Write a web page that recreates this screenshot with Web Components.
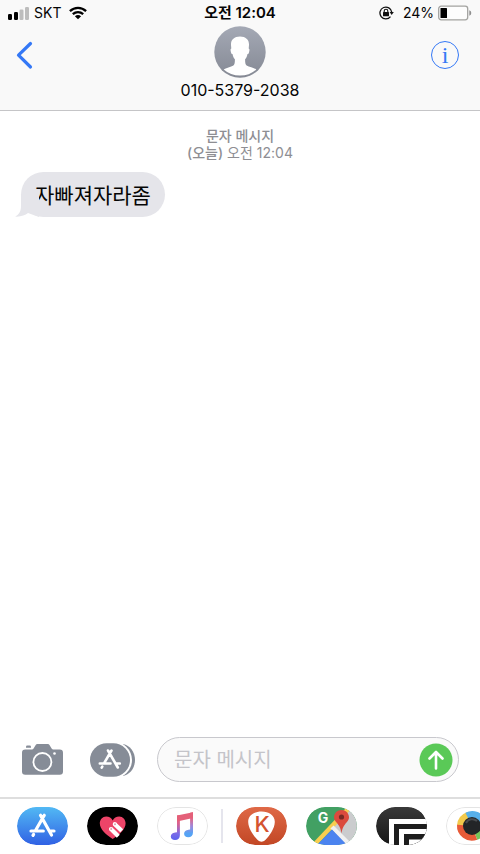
<!DOCTYPE html>
<html lang="ko">
<head>
<meta charset="utf-8">
<meta name="viewport" content="width=device-width, initial-scale=1">
<title>010-5379-2038</title>
<style>
    html, body {
        height: 100%;
        margin: 0;
    }
    body {
        font-family: Inter, "Noto Sans CJK KR", sans-serif;
        color: #050505;
        background: #ffffff;
    }
</style>
</head>
<body>
<messages-app></messages-app>

<script>
// small helper, every component clones its own template.
function define(name, html) {
    const temp = document.createElement('template');
    temp.innerHTML = html;

    window.customElements.define(name, class extends HTMLElement {
        constructor() {
            super();
            this.attachShadow({ mode: 'open' });
            this.shadowRoot.appendChild(temp.content.cloneNode(true));
        }
    });
}

// carrier, clock and battery.
define('status-bar', `
<style>
    :host {
        display: grid;
        grid-template-columns: 1fr auto 1fr;
        align-items: center;
        height: 26px;
        padding: 0 8px;
        font-size: 14px;
        line-height: 26px;
    }
    div {
        display: flex;
        align-items: center;
    }
    svg { display: block; }
    .left { gap: 5px; }
    .wifi { margin-left: 3px; }
    .right { justify-content: flex-end; gap: 4px; }
    .lock { margin-right: 5px; }
    time { font-size: 15px; font-weight: 600; }
</style>
<div class="left">
    <svg width="21" height="13" viewBox="0 0 21 13" aria-hidden="true">
        <rect x="0" y="7" width="4" height="6" rx="1.2"/>
        <rect x="6" y="5" width="4" height="8" rx="1.2"/>
        <rect x="11.5" y="2.5" width="4" height="10.5" rx="1.2" fill="#bdbdbd"/>
        <rect x="17" y="0" width="4" height="13" rx="1.2" fill="#bdbdbd"/>
    </svg>
    <span>SKT</span>
    <svg class="wifi" width="18" height="14" viewBox="0 0 18 14" fill="none" stroke="#000" stroke-width="2.3" aria-hidden="true">
        <path d="M.9 5.100C5.6.8 12.4.8 17.1 5.100"/>
        <path d="M3.8 8.200C6.900 5.500 11.1 5.500 14.200 8.200"/>
        <path d="M9 13.300 5.900 10.200Q9 7.900 12.100 10.200Z" fill="#000" stroke="none"/>
    </svg>
</div>
<time>오전 12:04</time>
<div class="right">
    <svg class="lock" width="15" height="14" viewBox="0 0 15 14" fill="none" stroke="#111" stroke-width="1.3" aria-hidden="true">
        <path d="M11.5 10.600A5.900 5.900 0 1 1 12.700 6.200"/>
        <path d="M10.6 6h4.200l-2.100 3z" fill="#111" stroke="none"/>
        <rect x="4" y="6" width="6" height="4.3" rx=".5" fill="#111" stroke="none"/>
        <path d="M5.200 6.300V5a1.800 1.800 0 0 1 3.600 0v1.300" stroke-width="1.1"/>
    </svg>
    <span>24%</span>
    <svg width="34" height="16" viewBox="0 0 34 16" aria-hidden="true">
        <rect x=".7" y="1.2" width="29" height="13.6" rx="2.5" fill="#fdfdfd" stroke="#a3a3a0" stroke-width="1.3"/>
        <rect x="2.5" y="3" width="6.500" height="10" rx=".6"/>
        <path d="M31.300 5.300q2 .6 2 2.700t-2 2.700z" fill="#8f8f8f"/>
    </svg>
</div>
`);

// back button, contact and info button.
define('contact-bar', `
<style>
    :host {
        display: grid;
        grid-template-columns: 1fr auto 1fr;
        height: 84px;
        padding: 0 16px;
    }
    button {
        display: flex;
        align-items: center;
        justify-content: center;
        align-self: start;
        width: 18px;
        height: 30px;
        margin: 14px 0 0;
        padding: 0;
        border: 0;
        background: none;
        color: #3478f6;
    }
    .info {
        justify-self: end;
        width: 38px;
    }
    .info span {
        box-sizing: border-box;
        width: 28px;
        height: 28px;
        border: 1px solid currentColor;
        border-radius: 50%;
        font: 24px/26px "Liberation Serif", serif;
        text-align: center;
    }
    .contact {
        display: flex;
        flex-direction: column;
        align-items: center;
        font-size: 16px;
        line-height: 25px;
    }
    svg { display: block; }
</style>
<button type="button" aria-label="뒤로">
    <svg width="18" height="30" viewBox="0 0 18 30" fill="none" stroke="currentColor" stroke-width="3.2" stroke-linecap="round" stroke-linejoin="round">
        <path d="M14.500 3.500 2.500 15.200 14.500 27"/>
    </svg>
</button>
<div class="contact">
    <svg width="52" height="52" viewBox="0 0 52 52" aria-hidden="true">
        <defs>
            <linearGradient id="grey" x2="0" y2="1">
                <stop stop-color="#a4a9b5"/>
                <stop offset="1" stop-color="#858994"/>
            </linearGradient>
        </defs>
        <circle cx="26" cy="26" r="25.7" fill="url(#grey)"/>
        <path d="M26 10.500c-5.800 0-9.300 3.300-9 8.500l.3 3.500c-1 .2-.9 1.500-.4 3.400.4 1.600.8 2.100 1.600 2.200.4 2.300 1.100 4 2.400 5.200 0 3.300-.2 5.100-1.500 6.100-2.400 1.600-7.600 2.200-9.700 4.100Q16.500 49.600 26 49.600t16.300-6.100c-2.100-1.900-7.300-2.500-9.700-4.100-1.300-1-1.500-2.800-1.500-6.100 1.300-1.200 2-2.900 2.400-5.200.8-.1 1.200-.6 1.600-2.200.5-1.900.6-3.200-.4-3.400L35 19c.3-5.200-3.200-8.500-9-8.500z" fill="#fff"/>
    </svg>
    <span>010-5379-2038</span>
</div>
<button class="info" type="button" aria-label="정보"><span>i</span></button>
`);

define('thread-stamp', `
<style>
    :host {
        display: block;
        color: #8e8e93;
        font-size: 14px;
        line-height: 17px;
        text-align: center;
    }
    b { font-weight: 500; }
</style>
<b><slot name="kind"></slot></b><br>
<b><slot name="day"></slot></b> <slot></slot>
`);

define('message-bubble', `
<style>
    :host {
        display: block;
        position: relative;
        width: fit-content;
        padding: 9px 14px 7px;
        border-radius: 23px;
        background: #e5e5ea;
        color: #050505;
        font-size: 21px;
        line-height: 29px;
    }
    svg {
        position: absolute;
        left: -6px;
        bottom: 0;
    }
</style>
<svg width="24" height="22" viewBox="0 0 24 22" fill="#e5e5ea" aria-hidden="true">
    <path d="M6 0v10.500C6 16 4.500 19.500 0 21.600c5.500.4 10-1 13-3.500l11 3.900V0z"/>
</svg>
<slot></slot>
`);

// camera, apps and the text field.
define('message-composer', `
<style>
    :host {
        display: flex;
        align-items: center;
        padding: 0 21px;
    }
    button {
        flex: none;
        display: block;
        margin: 0;
        padding: 0;
        border: 0;
        background: none;
    }
    svg { display: block; }
    .apps { margin: 0 22px 0 26px; }
    form {
        flex: 1;
        display: flex;
        align-items: center;
        box-sizing: border-box;
        min-width: 0;
        height: 45px;
        margin: 0;
        padding: 0 5px 0 16px;
        border: 1px solid #c8c8cd;
        border-radius: 23px;
        background: #fafafa;
    }
    input {
        flex: 1;
        min-width: 0;
        padding: 0;
        border: 0;
        outline: 0;
        background: none;
        color: #050505;
        font: inherit;
        font-size: 20px;
        line-height: 30px;
    }
    input::placeholder { color: #c4c4c9; opacity: 1; }
</style>
<button type="button" aria-label="카메라">
    <svg width="43" height="34" viewBox="0 0 43 34">
        <path d="M5 4.800V3.900Q5 2.600 6.300 2.600H8.700Q10 2.600 10 3.900V4.800Z" fill="#868c97"/>
        <path d="M4.300 6.500H10.200c1.300 0 2-.5 2.700-1.600l1.500-2.500C15 1.300 15.800.9 17 .9h9.200c1.200 0 2 .4 2.600 1.500l1.500 2.500c.7 1.100 1.400 1.600 2.700 1.600h5.700c2.200 0 3.300 1.100 3.300 3.300v18.600c0 2.200-1.100 3.300-3.300 3.300H4.300c-2.200 0-3.300-1.100-3.300-3.300V9.800c0-2.200 1.100-3.300 3.300-3.300z" fill="#868c97"/>
        <circle cx="21.4" cy="19" r="9" fill="none" stroke="#fff" stroke-width="1.8"/>
        <circle cx="33.5" cy="10.500" r="1.3" fill="#fff"/>
    </svg>
</button>
<button class="apps" type="button" aria-label="앱">
    <svg width="45" height="34" viewBox="0 0 45 34">
        <path d="M33 1c7 1.500 12 8 12 16s-5 14.500-12 16z" fill="#868c97"/>
        <rect x="-2" y="-1.500" width="44" height="37" rx="18.500" fill="#fff"/>
        <rect y=".3" width="40" height="33.400" rx="16.700" fill="#868c97"/>
        <g stroke="#fff" stroke-width="2.600" stroke-linecap="round" fill="none">
            <path d="M18 7.500 27.800 24.500M21.500 7.500 14 20.300M9.800 20.500H20.500M25.700 20.500H29.800M12.300 23.700 11.700 24.700"/>
        </g>
    </svg>
</button>
<form onsubmit="return false">
    <input type="text" placeholder="문자 메시지" aria-label="문자 메시지">
    <button type="submit" aria-label="보내기">
        <svg width="34" height="34" viewBox="0 0 34 34">
            <circle cx="17" cy="17" r="16.500" fill="#5ac957"/>
            <path d="M17 25.500V9.500M10.500 15.500 17 9l6.500 6.500" fill="none" stroke="#fff" stroke-width="2.600" stroke-linecap="round" stroke-linejoin="round"/>
        </svg>
    </button>
</form>
`);

// one pill in the dock, the drawing is slotted in.
define('app-pill', `
<style>
    :host { display: block; flex: none; }
    button {
        display: block;
        width: 51px;
        height: 38px;
        margin: 0;
        padding: 0;
        border: 0;
        border-radius: 19px;
        overflow: hidden;
        background: none;
    }
    ::slotted(svg) { display: block; }
</style>
<button type="button"><slot></slot></button>
`);

define('app-dock', `
<style>
    :host {
        display: flex;
        gap: 13px;
        padding: 8px 0 9px 17px;
        border-top: 2px solid #dedede;
        overflow: hidden;
    }
    .group {
        flex: none;
        display: flex;
        gap: 19px;
    }
    hr {
        flex: none;
        width: 2px;
        height: 34px;
        margin: 2px 0;
        border: 0;
        background: #e5e5ed;
    }
</style>
<div class="group">
    <app-pill>
        <svg width="51" height="38" viewBox="0 0 51 38" role="img" aria-label="App Store">
            <defs>
                <linearGradient id="sky" x2="0" y2="1">
                    <stop stop-color="#52b9f4"/>
                    <stop offset="1" stop-color="#3061e4"/>
                </linearGradient>
            </defs>
            <rect width="51" height="38" rx="19" fill="url(#sky)"/>
            <g stroke="#fff" stroke-width="3.200" stroke-linecap="round" fill="none">
                <path d="M23.500 8.300 34.500 28M27.300 8.300 18.500 23.500M14 24H26.300M32.500 24H37M16.600 27.400 16 28.400"/>
            </g>
        </svg>
    </app-pill>
    <app-pill>
        <svg width="51" height="38" viewBox="0 0 51 38" role="img" aria-label="Digital Touch">
            <rect width="51" height="38" rx="19"/>
            <path d="M25.700 32C19 27.600 12.800 22.300 12.800 16.300c0-4 2.800-6.900 6.400-6.900 2.900 0 5.300 1.400 6.500 4 1.200-2.600 3.600-4 6.500-4 3.600 0 6.400 2.900 6.400 6.900 0 6-6.200 11.300-12.900 15.700z" fill="#ed4468"/>
            <g stroke="#fff" stroke-width="4.200" fill="none">
                <path d="M27.800 17.200 34.700 23.700M24 22 31.300 29.300"/>
                <path d="M27.800 17.200h.01M24 22h.01" stroke-linecap="round"/>
            </g>
            <circle cx="28" cy="17.300" r="1" fill="#e0a0af"/>
            <circle cx="24.200" cy="22.100" r="1" fill="#e0a0af"/>
        </svg>
    </app-pill>
    <app-pill>
        <svg width="51" height="38" viewBox="0 0 51 38" role="img" aria-label="Music">
            <defs>
                <linearGradient id="note" x2="0" y2="1">
                    <stop stop-color="#f0607c"/>
                    <stop offset=".35" stop-color="#d8618f"/>
                    <stop offset=".75" stop-color="#7b6ce8"/>
                    <stop offset="1" stop-color="#5b62ee"/>
                </linearGradient>
                <linearGradient id="stem" x2="0" y2="1">
                    <stop offset=".2" stop-color="#ec6078"/>
                    <stop offset=".55" stop-color="#a287d8"/>
                    <stop offset=".85" stop-color="#55a3f5"/>
                </linearGradient>
            </defs>
            <rect x=".5" y=".5" width="50" height="37" rx="18.500" fill="#fff" stroke="#e4e4e4"/>
            <path d="M20 8.400 22.900 7.900V28c0 3.300-1.900 5-4.900 5-2.600 0-4.200-1.400-4.200-3.500 0-2.300 1.700-3.800 4.400-4l1.800-.2z" fill="url(#note)"/>
            <path d="M33.100 5.700 36 5.200V25.200c0 3.300-1.900 5.100-4.800 5.100-2.500 0-4.100-1.400-4.100-3.500 0-2.300 1.700-3.800 4.400-4l1.600-.2z" fill="url(#stem)"/>
            <path d="M20 8.400 36 5.200V11L20 14.500z" fill="#e46079"/>
        </svg>
    </app-pill>
</div>
<hr>
<div class="group">
    <app-pill>
        <svg width="51" height="38" viewBox="0 0 51 38" role="img" aria-label="Pick">
            <defs>
                <linearGradient id="clay" x2="0" y2="1">
                    <stop stop-color="#df6947"/>
                    <stop offset="1" stop-color="#c24725"/>
                </linearGradient>
            </defs>
            <rect width="51" height="38" rx="19" fill="url(#clay)"/>
            <path d="M25.500 4.500C33 4.500 39 8.600 38.800 15c-.2 6.500-5 13.500-9.500 17.900-2.400 2.300-5.200 2.300-7.600 0C17.200 28.500 12.400 21.500 12.200 15 12 8.600 18 4.500 25.500 4.500z" fill="#fff"/>
            <text x="26" y="25" text-anchor="middle" font-family="Inter, sans-serif" font-size="22" font-weight="500" fill="#d4532f">K</text>
        </svg>
    </app-pill>
    <app-pill>
        <svg width="51" height="38" viewBox="0 0 51 38" role="img" aria-label="Maps">
            <defs>
                <clipPath id="pill"><rect width="51" height="38" rx="19"/></clipPath>
            </defs>
            <g clip-path="url(#pill)">
                <rect width="51" height="38" fill="#42a063"/>
                <path d="M26 21 43 0h8v38H36z" fill="#cbccce"/>
                <path d="M8 38 45-1" stroke="#f8ce50" stroke-width="4.500"/>
                <path d="M26 20 44 38" stroke="#f1f1f1" stroke-width="4.500"/>
                <path d="M9.500 39.500 26 22.500 42 39z" fill="#4b83ef"/>
            </g>
            <path d="M35.500 26.500c-.8-6-2.500-8-5-11C29 13.700 28 12.300 28 10.200 28 6.200 31.300 3 35.500 3S43 6.200 43 10.200c0 2.100-1 3.500-2.500 5.300-2.500 3-4.200 5-5 11z" fill="#db4a3d"/>
            <circle cx="35.500" cy="10" r="2.600" fill="#772a24"/>
            <text x="17" y="16" text-anchor="middle" font-family="Inter, sans-serif" font-size="14" font-weight="700" fill="#fff">G</text>
        </svg>
    </app-pill>
    <app-pill>
        <svg width="51" height="38" viewBox="0 0 51 38" role="img" aria-label="Frames">
            <defs>
                <linearGradient id="coal" x2="0" y2="1">
                    <stop stop-color="#393939"/>
                    <stop offset="1" stop-color="#161616"/>
                </linearGradient>
            </defs>
            <rect width="51" height="38" rx="19" fill="url(#coal)"/>
            <path d="M13 38V12H51V38z" fill="#fff"/>
            <path d="M18 38V17H51V38z" fill="#1d1d1d"/>
            <path d="M23 38V22H51V38z" fill="#fff"/>
            <path d="M28 38V27H51V38z" fill="#1d1d1d"/>
            <path d="M33 38V32.500H51V38z" fill="#fff"/>
        </svg>
    </app-pill>
    <app-pill>
        <svg width="51" height="38" viewBox="0 0 51 38" role="img" aria-label="Camera">
            <rect x=".5" y=".5" width="50" height="37" rx="18.500" fill="#fff" stroke="#e4e4e4"/>
            <g fill="none" stroke-width="7">
                <path d="M14.500 18.500A11.500 11.500 0 0 1 22 8.500" stroke="#f2c94b"/>
                <path d="M21 8.800A11.500 11.500 0 0 1 37 15" stroke="#58b0ea"/>
                <path d="M37 15A11.500 11.500 0 0 1 30 29.500" stroke="#76c55b"/>
                <path d="M14.500 18A11.500 11.500 0 0 0 30 29.500" stroke="#e85b38"/>
            </g>
            <circle cx="26" cy="19" r="9" fill="#232527"/>
            <path d="M20 16a7 7 0 0 1 11-2" fill="none" stroke="#4b4d50" stroke-width="2"/>
        </svg>
    </app-pill>
</div>
`);

// main component.
define('messages-app', `
<style>
    :host {
        display: flex;
        flex-direction: column;
        min-height: 100vh;
    }
    header {
        border-bottom: 1px solid #c5c5c7;
        background: #f9f9f9;
    }
    main {
        flex: 1;
        padding: 16px 21px;
    }
    message-bubble { margin-top: 11px; }
    message-composer { margin-bottom: 15px; }
</style>
<header>
    <status-bar></status-bar>
    <contact-bar></contact-bar>
</header>
<main>
    <thread-stamp>
        <span slot="kind">문자 메시지</span>
        <span slot="day">(오늘)</span>
        오전 12:04
    </thread-stamp>
    <message-bubble>자빠져자라좀</message-bubble>
</main>
<message-composer></message-composer>
<app-dock></app-dock>
`);
</script>
</body>
</html>
